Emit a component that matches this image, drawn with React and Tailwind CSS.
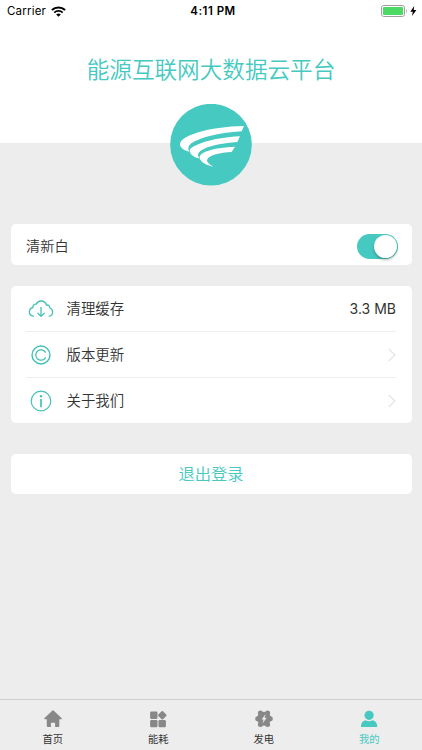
import React, { useState } from "react";

const tabs = [
  { id: "home", label: "首页", Icon: HomeIcon },
  { id: "usage", label: "能耗", Icon: UsageIcon },
  { id: "power", label: "发电", Icon: PowerIcon },
  { id: "mine", label: "我的", Icon: UserIcon },
];

const settings = [
  { id: "cache", label: "清理缓存", Icon: CloudIcon, value: "3.3 MB" },
  { id: "version", label: "版本更新", Icon: CopyrightIcon },
  { id: "about", label: "关于我们", Icon: InfoIcon },
];

function WifiIcon() {
  return (
    <svg width="15" height="11" viewBox="0 0 15 11" fill="none" stroke="#000">
      <path d="M0.9 4.1a9.6 9.6 0 0 1 13.2 0" strokeWidth="2.1" />
      <path d="M3.3 6.6a6.1 6.1 0 0 1 8.4 0" strokeWidth="1.9" />
      <path d="M7.5 10.7 5.2 8.5a3.4 3.4 0 0 1 4.6 0z" fill="#000" stroke="none" />
    </svg>
  );
}

function BatteryIcon() {
  return (
    <svg width="36" height="12" viewBox="0 0 36 12">
      <rect x="0.5" y="0.5" width="23" height="11" rx="2.2" fill="#fff" stroke="#a0a0a0" />
      <rect x="2" y="2" width="20" height="8" rx="0.8" fill="#4cd964" />
      <path d="M25 4v4c1-.5 1-3.5 0-4z" fill="#999" />
      <path d="M33.2 1 29.3 6.7h2.5L31 11l4.4-5.9h-2.7z" fill="#000" />
    </svg>
  );
}

function Logo() {
  return (
    <svg width="82" height="82" viewBox="30 27 246 246">
      <circle cx="153" cy="149" r="122.5" fill="#45c9c0" />
      <g fill="#fff">
        <path d="M252 93C200 94 150 101 115 112C80 123 60 135 60 148C60 158 72 167 87 170C83 160 85 152 94 145C122 126 180 113 245 109Z" />
        <path d="M240 124C200 126 155 133 125 144C102 152 88 160 89 168C91 180 103 187 119 191C112 182 113 175 121 168C142 152 185 145 232 141Z" />
        <path d="M225 155C195 156 160 161 140 169C125 175 118 181 119 189C121 201 139 211 160 215C146 207 139 200 142 193C148 180 180 173 215 171Z" />
      </g>
    </svg>
  );
}

function CloudIcon() {
  return (
    <svg width="26" height="20" viewBox="0 0 26 20" fill="none" stroke="#45c0b8" strokeWidth="1.3" strokeLinecap="round" strokeLinejoin="round">
      <path d="M5.4 17.1C2.8 16.9 1.3 15 1.4 12.8c0-2.3 1.5-3.8 3.5-4.3C4.7 6.5 6.2 5 8.2 5.2 9.2 3 11 2 13.1 2c2.6 0 4.7 1.5 5.3 4 2.2-.2 3.5 1.1 3.4 3 1.8.7 2.8 2 2.8 3.9 0 2.3-1.3 3.9-3.4 4.2" />
      <path d="M13 8.5v8.8M9.8 14.2l3.2 3.2 3.2-3.2" />
    </svg>
  );
}

function CopyrightIcon() {
  return (
    <svg width="22" height="22" viewBox="0 0 22 22" fill="none" stroke="#45c0b8">
      <circle cx="11" cy="11" r="9" strokeWidth="1.4" />
      <path d="M15.4 8.2a5.2 5.2 0 1 0 0 5.6" strokeWidth="1.3" strokeLinecap="round" />
    </svg>
  );
}

function InfoIcon() {
  return (
    <svg width="22" height="22" viewBox="0 0 22 22" fill="none" stroke="#45c0b8">
      <circle cx="11" cy="11" r="9.8" strokeWidth="1.2" />
      <path d="M11 9v8.2" strokeWidth="1.7" />
      <circle cx="11" cy="6.3" r="1.2" fill="#45c0b8" stroke="none" />
    </svg>
  );
}

function ChevronIcon() {
  return (
    <svg width="8" height="14" viewBox="0 0 8 14" fill="none" stroke="#e6e6e6" strokeWidth="1.3">
      <path d="M0.8 1 7 7 0.8 13" />
    </svg>
  );
}

function HomeIcon() {
  return (
    <svg width="18" height="18" viewBox="0 0 18 18" fill="currentColor">
      <path d="M8.2 0.7a1.2 1.2 0 0 1 1.6 0l7.7 7.4c.5.5.2 1.1-.4 1.1H15.3V16.1c0 .6-.3.9-.9.9h-3.3v-3.7c0-.4-.2-.6-.6-.6H7.5c-.4 0-.6.2-.6.6V17H3.7c-.6 0-.9-.3-.9-.9V9.2H1c-.6 0-.9-.6-.4-1.1z" />
    </svg>
  );
}

function UsageIcon() {
  return (
    <svg width="18" height="18" viewBox="0 0 18 18" fill="currentColor">
      <rect x="1.1" y="1.5" width="7.4" height="7.4" rx="1.3" />
      <rect x="1.1" y="9.9" width="7.4" height="7.4" rx="1.3" />
      <rect x="9.5" y="9.9" width="7.4" height="7.4" rx="1.3" />
      <rect x="10" y="1.9" width="6.6" height="6.6" rx="1" transform="rotate(45 13.3 5.2)" />
    </svg>
  );
}

function PowerIcon() {
  return (
    <svg width="18" height="18" viewBox="0 0 18 18">
      <g fill="currentColor">
        <circle cx="9" cy="8.8" r="7" />
        <circle cx="2.7" cy="8.8" r="2.5" />
        <circle cx="15.3" cy="8.8" r="2.5" />
        <circle cx="5.4" cy="3.1" r="2.5" />
        <circle cx="12.6" cy="3.1" r="2.5" />
        <circle cx="5.4" cy="14.5" r="2.5" />
        <circle cx="12.6" cy="14.5" r="2.5" />
      </g>
      <path d="M10.6 4 6.6 9.4h2L7.5 13.6l4.2-5.8H9.5z" fill="#ededed" />
    </svg>
  );
}

function UserIcon() {
  return (
    <svg width="18" height="18" viewBox="0 0 18 18" fill="currentColor">
      <circle cx="9.1" cy="5.3" r="4.6" />
      <path d="M0.9 17c0-4 1.8-6.3 4.8-6.7 2 1.2 4.8 1.2 6.8 0 3 .4 4.8 2.7 4.8 6.7z" />
    </svg>
  );
}

const App = () => {
  const [whiteTheme, setWhiteTheme] = useState(true);
  const [activeTab, setActiveTab] = useState("mine");

  return (
    <div className="h-[750px] w-[422px] overflow-hidden bg-[#ededed] flex flex-col font-['Inter','Noto_Sans_CJK_SC',sans-serif] text-[#333]">
      <header className="h-[143px] shrink-0 bg-white">
        {/* Status bar */}
        <div className="grid grid-cols-3 items-center h-[22px] pl-[7px] pr-[5px] text-[11.5px] text-black">
          <div className="flex items-center gap-[5px] pt-px tracking-[0.2px]">
            <span>Carrier</span>
            <WifiIcon />
          </div>
          <span className="pt-px pl-[2px] text-center font-semibold tracking-[0.5px]">4:11 PM</span>
          <div className="flex justify-end">
            <BatteryIcon />
          </div>
        </div>
        <h1 className="mt-[30px] text-center text-[22.6px] leading-[34px] font-[350] text-[#45c9c0] font-['Noto_Sans_CJK_SC',sans-serif]">
          能源互联网大数据云平台
        </h1>
      </header>

      <div className="-mt-[39px] flex justify-center">
        <Logo />
      </div>

      <main className="flex-1 mt-[38px] px-[10.5px]">
        <div className="h-[41px] bg-white rounded-[5px] flex items-center justify-between pl-[15.5px] pr-[13.5px]">
          <span className="pt-[2px] text-[14.2px] leading-5 font-[350]">清新白</span>
          <button
            onClick={() => setWhiteTheme(!whiteTheme)}
            className={`mt-[3px] w-[41px] h-[25px] rounded-full p-[1px] flex items-center ${
              whiteTheme ? "bg-[#45c9c0] justify-end" : "bg-gray-300 justify-start"
            }`}
          >
            <span className="w-[23px] h-[23px] rounded-full bg-white shadow-[0_2px_3px_rgba(0,0,0,0.25)]" />
          </button>
        </div>

        <div className="mt-[21px] h-[137px] bg-white rounded-[5px] px-[15.5px] grid grid-rows-[46px_46px_45px] divide-y divide-[#eeeeee]">
          {settings.map(({ id, label, Icon, value }) => (
            <div key={id} className="flex items-center">
              <div className="w-[30px] flex justify-center">
                <Icon />
              </div>
              <span className="ml-[10.5px] pt-px flex-1 text-[14.4px] leading-5 font-[350]">{label}</span>
              {value ? <span className="text-[14px]">{value}</span> : <ChevronIcon />}
            </div>
          ))}
        </div>

        <button className="mt-[31px] w-full h-[40px] bg-white rounded-[5px] text-[16.3px] leading-6 font-[350] text-[#45c9c0]">
          退出登录
        </button>
      </main>

      <nav className="h-[51px] shrink-0 border-t border-[#cfcfcf] grid grid-cols-4">
        {tabs.map(({ id, label, Icon }) => (
          <button
            key={id}
            onClick={() => setActiveTab(id)}
            className={`flex flex-col items-center pt-[10px] ${
              activeTab === id ? "text-[#45c9c0]" : "text-[#888]"
            }`}
          >
            <Icon />
            <span
              className={`mt-[4px] text-[10.3px] leading-[14px] ${
                activeTab === id ? "text-[#45c9c0]" : "text-[#333]"
              }`}
            >
              {label}
            </span>
          </button>
        ))}
      </nav>
    </div>
  );
};

export default App;
